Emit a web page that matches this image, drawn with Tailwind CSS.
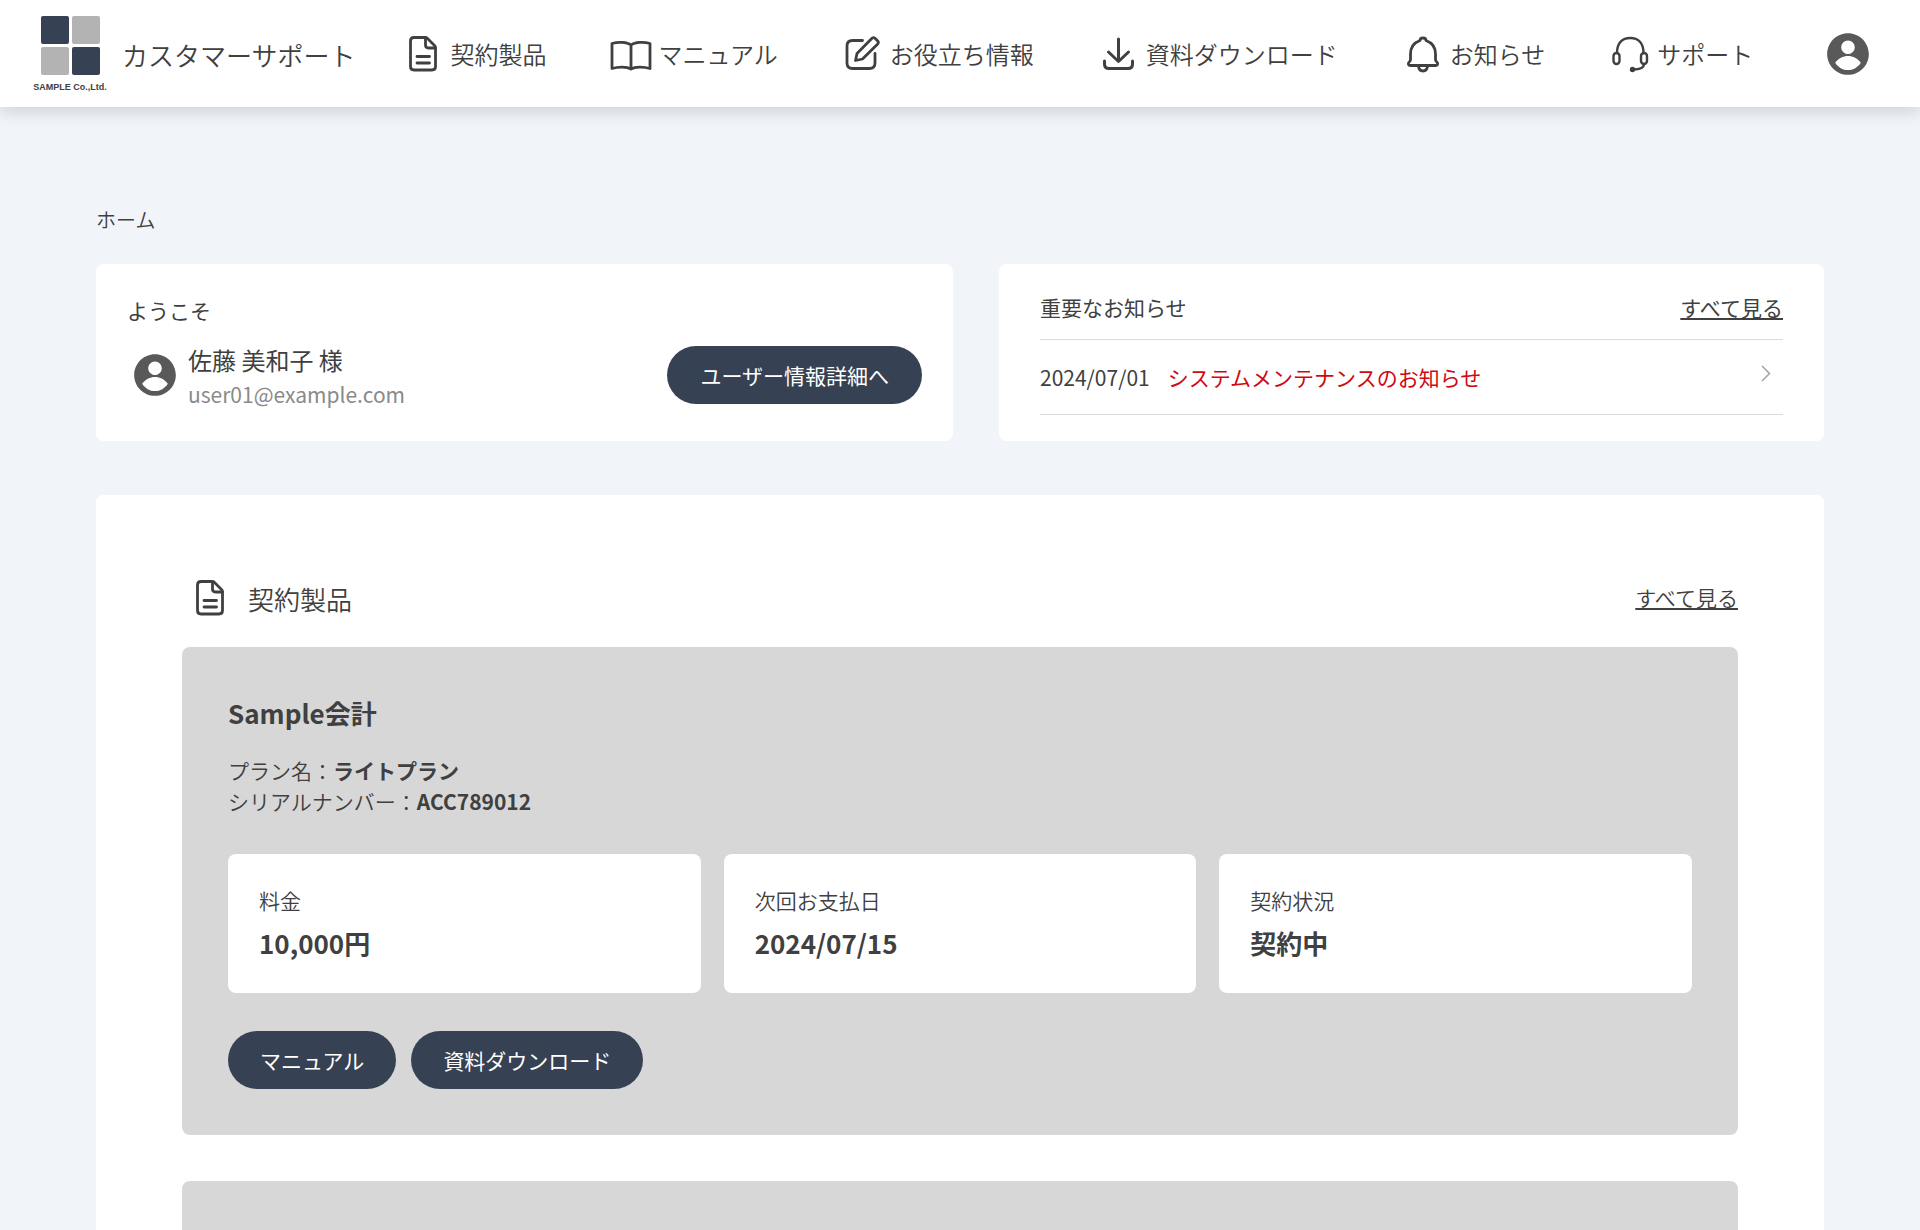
<!DOCTYPE html>
<html lang="ja">
<head>
<meta charset="utf-8">
<meta name="viewport" content="width=device-width, initial-scale=1">
<title>カスタマーサポート</title>
<script src="https://cdn.jsdelivr.net/npm/@tailwindcss/browser@4"></script>
</head>
<body class="flex min-h-screen flex-col bg-[#f1f5fa] font-['Noto_Sans_CJK_JP',sans-serif] text-[21px] leading-8 font-[350] text-[#404040]">

<svg class="hidden" aria-hidden="true">
  <symbol id="doc" viewBox="0 0 42 42" fill="none" stroke="currentColor" stroke-width="2.800" stroke-linecap="round" stroke-linejoin="round">
    <path d="M12 4.500H23Q24.500 4.500 25.500 5.500L32.500 12.500Q33.500 13.500 33.500 15V33.500Q33.500 37 30 37H12Q8.500 37 8.500 33.500V8Q8.500 4.500 12 4.500Z"/>
    <path d="M23.500 5V12Q23.500 15 26.500 15H33.500M15 23.500H27.500M15 30H27.500"/>
  </symbol>
  <symbol id="account" viewBox="0 0 24 24" fill="currentColor">
    <path d="M12 2C6.480 2 2 6.480 2 12s4.480 10 10 10 10-4.480 10-10S17.520 2 12 2zm0 3.500c1.800 0 3.250 1.450 3.250 3.250S13.800 12 12 12 8.750 10.550 8.750 8.750 10.200 5.500 12 5.500zm0 14.200c-2.500 0-4.750-1.350-6.150-3.550C7.300 14.300 9.600 13 12 13s4.700 1.300 6.150 3.150C16.750 18.350 14.500 19.700 12 19.700z"/>
  </symbol>
</svg>

<header class="relative flex h-[107px] shrink-0 items-center bg-white pr-[47px] pl-[33px] shadow-[0_6px_14px_rgba(0,0,0,0.13)]">
  <a href="#" class="flex items-center gap-[15px] pt-0.5 whitespace-nowrap">
    <span class="flex w-[74px] flex-col items-center gap-1.5">
      <span class="grid grid-cols-2 gap-[3px]">
        <span class="size-7 rounded-[2px] bg-[#364153]"></span>
        <span class="size-7 rounded-[2px] bg-[#b3b3b3]"></span>
        <span class="size-7 rounded-[2px] bg-[#b3b3b3]"></span>
        <span class="size-7 rounded-[2px] bg-[#364153]"></span>
      </span>
      <span class="font-['Liberation_Sans',sans-serif] text-[9px] leading-3 font-bold">SAMPLE Co.,Ltd.</span>
    </span>
    <span class="text-[26px]">カスタマーサポート</span>
  </a>
  <nav class="ml-[47px] flex items-center gap-16 text-2xl whitespace-nowrap">
    <a href="#" class="flex items-center gap-1.5"><svg class="size-[42px]"><use href="#doc"/></svg>契約製品</a>
    <a href="#" class="flex items-center gap-1.5">
      <svg class="size-[42px]" viewBox="0 0 42 42" fill="none" stroke="currentColor" stroke-width="2.800" stroke-linejoin="round"><path d="M21 12C17 9 8.500 8.500 2 10.500V35.500C8.500 33.500 17 33.500 21 36C25 33.500 33.500 33.500 40 35.500V10.500C33.500 8.500 25 9 21 12ZM21 12V36"/></svg>マニュアル</a>
    <a href="#" class="flex items-center gap-1.5">
      <svg class="size-[42px]" viewBox="0 0 42 42" fill="none" stroke="currentColor" stroke-width="2.800" stroke-linecap="round" stroke-linejoin="round"><path d="M20.500 7.500H10.500Q5 7.500 5 13V30Q5 35.500 10.500 35.500H27.500Q33 35.500 33 30V20.500"/><path d="M13.500 27.500L15 20.500L30 5.300Q31.500 4 33 5.300L35.700 8Q37 9.500 35.700 11L20.500 26Z"/></svg>お役立ち情報</a>
    <a href="#" class="flex items-center gap-1.5">
      <svg class="size-[42px]" viewBox="0 0 42 42" fill="none" stroke="currentColor" stroke-width="3" stroke-linecap="round" stroke-linejoin="round"><path d="M20.500 6V28M10.500 19L20.500 28.500L30.500 19M6.500 28V31Q6.500 35.500 11 35.500H30Q34.500 35.500 34.500 31V28"/></svg>資料ダウンロード</a>
    <a href="#" class="flex items-center gap-1.5">
      <svg class="size-[42px]" viewBox="0 0 42 42" fill="none" stroke="currentColor" stroke-width="2.800" stroke-linecap="round" stroke-linejoin="round"><path d="M18 7.500Q18 5 21 5Q24 5 24 7.500C31 10 33.500 15 33.500 21V26.500Q33.500 28 34.800 29Q36 30 35.500 31.500Q35 32.500 33.500 32.500H8.500Q7 32.500 6.500 31.500Q6 30 7.200 29Q8.500 28 8.500 26.500V21C8.500 15 11 10 18 7.500ZM16.500 33Q17 38 21 38Q25 38 25.500 33"/></svg>お知らせ</a>
    <a href="#" class="flex items-center gap-1.5">
      <svg class="size-[42px]" viewBox="0 0 42 42" fill="none" stroke="currentColor" stroke-width="2.400" stroke-linecap="round"><rect x="4.500" y="20" width="6" height="11" rx="3"/><rect x="32" y="20" width="6" height="11" rx="3"/><path d="M8 20C8 9.500 13.500 5 21.200 5S34.500 9.500 34.500 20M35 31C35 35 29.500 36.500 24 36.500"/><circle cx="23.500" cy="36.500" r="1.500" fill="currentColor"/></svg>サポート</a>
  </nav>
  <button type="button" aria-label="アカウント" class="ml-auto text-[#595959]"><svg class="size-[50px]"><use href="#account"/></svg></button>
</header>

<main class="flex flex-1 flex-col px-[5%] pt-[98px]">
  <nav class="mb-[29px] text-xl leading-[30px]"><a href="#">ホーム</a></nav>

  <div class="grid grid-cols-[857fr_825fr] gap-[46px] font-normal">
    <section class="rounded-lg bg-white px-[31px] py-[30px]">
      <p>ようこそ</p>
      <div class="mt-[13px] flex items-center gap-2">
        <svg class="ml-[3px] size-[50px] text-[#595959]"><use href="#account"/></svg>
        <div class="pt-1">
          <p class="text-2xl leading-[34px]">佐藤 美和子 様</p>
          <p class="leading-[34px] text-[#8a8a8a]">user01@example.com</p>
        </div>
        <button type="button" class="ml-auto h-[58px] rounded-full bg-[#364153] px-[33px] text-white">ユーザー情報詳細へ</button>
      </div>
    </section>

    <section class="rounded-lg bg-white px-[41px] pt-[27px]">
      <div class="flex items-center justify-between border-b border-[#dcdcdc] pb-4">
        <h2>重要なお知らせ</h2>
        <a href="#" class="underline">すべて見る</a>
      </div>
      <a href="#" class="flex items-center gap-[18px] border-b border-[#dcdcdc] py-[21px] pr-[11px]">
        <time datetime="2024-07-01">2024/07/01</time>
        <span class="text-[#d0080f]">システムメンテナンスのお知らせ</span>
        <svg class="ml-auto h-6 w-3" viewBox="0 0 12 24" fill="none" stroke="#a3a3a3" stroke-width="1.500"><path d="M2 1L9.500 8.500L2 16"/></svg>
      </a>
    </section>
  </div>

  <section class="mt-[54px] flex flex-1 flex-col rounded-t-lg bg-white px-[86px] pt-[82px]">
    <div class="mb-7 flex items-center gap-[17px] pl-[7px]">
      <svg class="size-[42px]"><use href="#doc"/></svg>
      <h2 class="pt-0.5 text-[26px] leading-10">契約製品</h2>
      <a href="#" class="ml-auto pb-0.5 underline">すべて見る</a>
    </div>

    <article class="rounded-lg bg-[#d7d7d7] p-[46px]">
      <h3 class="text-[26px] leading-10 font-bold">Sample会計</h3>
      <div class="mt-[22px] leading-[31px]">
        <p>プラン名：<b class="font-bold">ライトプラン</b></p>
        <p>シリアルナンバー：<b class="font-bold">ACC789012</b></p>
      </div>
      <dl class="mt-[37px] grid grid-cols-3 gap-[23px]">
        <div class="rounded-lg bg-white px-[31px] pt-[30px] pb-[31px]">
          <dt>料金</dt>
          <dd class="mt-2 text-[26px] leading-[38px] font-bold">10,000円</dd>
        </div>
        <div class="rounded-lg bg-white px-[31px] pt-[30px] pb-[31px]">
          <dt>次回お支払日</dt>
          <dd class="mt-2 text-[26px] leading-[38px] font-bold">2024/07/15</dd>
        </div>
        <div class="rounded-lg bg-white px-[31px] pt-[30px] pb-[31px]">
          <dt>契約状況</dt>
          <dd class="mt-2 text-[26px] leading-[38px] font-bold">契約中</dd>
        </div>
      </dl>
      <div class="mt-[38px] flex gap-[15px]">
        <button type="button" class="h-[58px] rounded-full bg-[#364153] px-8 font-normal text-white">マニュアル</button>
        <button type="button" class="h-[58px] rounded-full bg-[#364153] px-8 font-normal text-white">資料ダウンロード</button>
      </div>
    </article>

    <article class="mt-[46px] min-h-12 flex-1 rounded-t-lg bg-[#d7d7d7]"></article>
  </section>
</main>
</body>
</html>
